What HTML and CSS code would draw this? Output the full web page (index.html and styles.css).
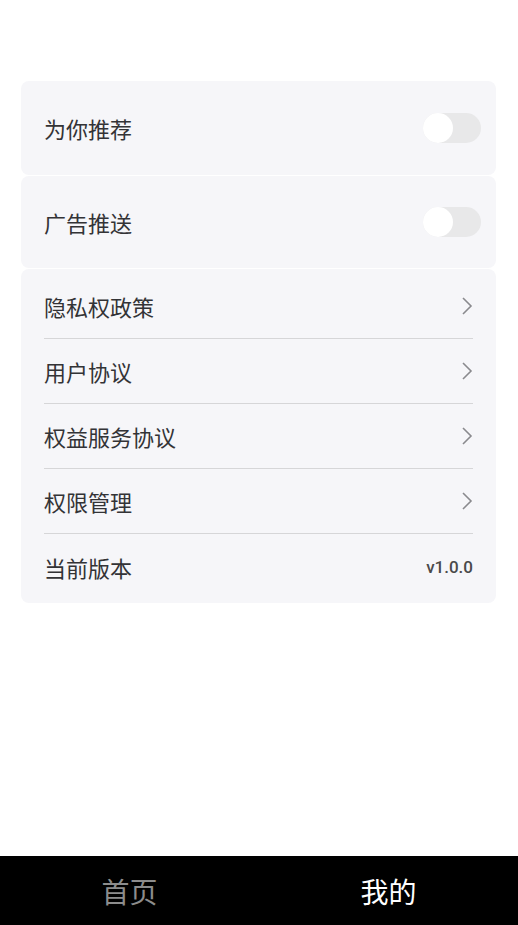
FILE: index.html
```html
<!DOCTYPE html>
<html>
  <head>
    <title>我的</title>
    <link rel="stylesheet" href="styles.css">
  </head>
  <body>
    <div class="page">
      <div class="card switch-card">
        <span class="label">为你推荐</span>
        <span class="switch"><span class="knob"></span></span>
      </div>
      <div class="card switch-card second">
        <span class="label">广告推送</span>
        <span class="switch"><span class="knob"></span></span>
      </div>
      <div class="card list-card">
        <div class="row">
          <span class="label">隐私权政策</span>
          <svg class="arrow" viewBox="0 0 12 20"><path d="M2 2 L10 10 L2 18" /></svg>
        </div>
        <div class="row">
          <span class="label">用户协议</span>
          <svg class="arrow" viewBox="0 0 12 20"><path d="M2 2 L10 10 L2 18" /></svg>
        </div>
        <div class="row">
          <span class="label">权益服务协议</span>
          <svg class="arrow" viewBox="0 0 12 20"><path d="M2 2 L10 10 L2 18" /></svg>
        </div>
        <div class="row">
          <span class="label">权限管理</span>
          <svg class="arrow" viewBox="0 0 12 20"><path d="M2 2 L10 10 L2 18" /></svg>
        </div>
        <div class="row last">
          <span class="label">当前版本</span>
          <span class="version">v1.0.0</span>
        </div>
      </div>
    </div>
    <div class="tabbar">
      <div class="tab">首页</div>
      <div class="tab active">我的</div>
    </div>
  </body>
</html>
```

FILE: styles.css
```css
body {
  margin: 0;
  padding: 0;
  background-color: #FFFFFF;
  font-family: "Noto Sans CJK SC", "Noto Sans", sans-serif;
  color: #333333;
  height: 925px;
  display: flex;
  flex-direction: column;
}
.page {
  flex: 1;
  padding: 81px 22px 0 21px;
  display: flex;
  flex-direction: column;
  gap: 1px;
}
.card {
  background-color: #F6F6F9;
  border-radius: 8px;
}
.switch-card {
  height: 94px;
  display: flex;
  align-items: center;
  justify-content: space-between;
  padding: 0 15px 0 23px;
}
.switch-card.second {
  height: 92px;
}
.label {
  font-size: 22px;
  line-height: 1;
  color: #333336;
}
.switch {
  width: 58px;
  height: 30px;
  border-radius: 15px;
  background-color: #E8E8E9;
  display: flex;
  align-items: center;
}
.knob {
  width: 30px;
  height: 30px;
  border-radius: 50%;
  background-color: #FFFFFF;
}
.list-card {
  padding: 5px 23px 4px 23px;
}
.row {
  height: 64px;
  display: flex;
  align-items: center;
  justify-content: space-between;
  border-bottom: 1px solid #D6D6D8;
}
.row.last {
  border-bottom: none;
  height: 65px;
}
.arrow {
  width: 12px;
  height: 20px;
  fill: none;
  stroke: #8A8A8E;
  stroke-width: 1.6;
}
.version {
  font-family: "Roboto", "Noto Sans", sans-serif;
  font-size: 17px;
  font-weight: 500;
  color: #4A4A4A;
}
.tabbar {
  height: 69px;
  background-color: #000000;
  display: flex;
}
.tab {
  flex: 1;
  display: flex;
  align-items: center;
  justify-content: center;
  font-size: 28px;
  color: #8C8C8C;
}
.tab.active {
  color: #FFFFFF;
}
```
